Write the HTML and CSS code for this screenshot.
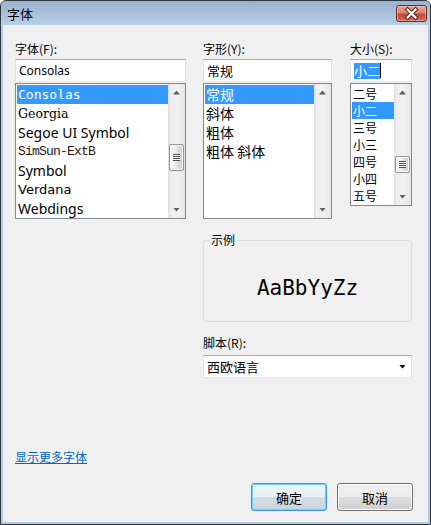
FILE: index.html
```html
<!DOCTYPE html>
<html lang="zh-CN">

<head>
  <meta charset="UTF-8">
  <title>字体</title>
  <link rel="stylesheet" href="styles.css">
</head>

<body>
  <div class="window">
    <div class="titlebar">
      <span class="titlebar__text">字体</span>
      <button class="titlebar__close" aria-label="关闭">
        <svg width="29" height="15" viewBox="0 0 29 15">
          <path d="M10.5 3.5 L18.5 11.5 M18.5 3.5 L10.5 11.5" stroke="#5b2520" stroke-width="4.2" stroke-linecap="square" fill="none" />
          <path d="M10.5 3.5 L18.5 11.5 M18.5 3.5 L10.5 11.5" stroke="#fff" stroke-width="2.2" stroke-linecap="square" fill="none" />
        </svg>
      </button>
    </div>
    <div class="frame">
      <div class="client">
        <div class="pickers">
          <div class="picker picker--font">
            <label class="field-label">字体(F):</label>
            <div class="edit">Consolas</div>
            <div class="listbox">
              <ul class="listbox__items">
                <li class="is-selected face-consolas">Consolas</li>
                <li class="face-georgia">Georgia</li>
                <li class="face-sans">Segoe UI Symbol</li>
                <li class="face-simsun">SimSun-ExtB</li>
                <li class="face-sans">Symbol</li>
                <li class="face-verdana">Verdana</li>
                <li class="face-sans">Webdings</li>
              </ul>
              <div class="scrollbar">
                <span class="scrollbar__btn scrollbar__btn--up"></span>
                <span class="scrollbar__track"><span class="scrollbar__thumb thumb-font"></span></span>
                <span class="scrollbar__btn scrollbar__btn--down"></span>
              </div>
            </div>
          </div>

          <div class="picker picker--style">
            <label class="field-label">字形(Y):</label>
            <div class="edit">常规</div>
            <div class="listbox">
              <ul class="listbox__items listbox__items--style">
                <li class="is-selected">常规</li>
                <li>斜体</li>
                <li>粗体</li>
                <li>粗体 斜体</li>
              </ul>
              <div class="scrollbar">
                <span class="scrollbar__btn scrollbar__btn--up"></span>
                <span class="scrollbar__track"></span>
                <span class="scrollbar__btn scrollbar__btn--down"></span>
              </div>
            </div>
          </div>

          <div class="picker picker--size">
            <label class="field-label">大小(S):</label>
            <div class="edit"><span class="edit__sel">小二</span><span class="edit__caret"></span></div>
            <div class="listbox listbox--short">
              <ul class="listbox__items listbox__items--size">
                <li>二号</li>
                <li class="is-selected">小二</li>
                <li>三号</li>
                <li>小三</li>
                <li>四号</li>
                <li>小四</li>
                <li>五号</li>
              </ul>
              <div class="scrollbar">
                <span class="scrollbar__btn scrollbar__btn--up"></span>
                <span class="scrollbar__track"><span class="scrollbar__thumb thumb-size"></span></span>
                <span class="scrollbar__btn scrollbar__btn--down"></span>
              </div>
            </div>
          </div>
        </div>

        <div class="extras">
          <fieldset class="sample">
            <legend>示例</legend>
            <div class="sample__text">AaBbYyZz</div>
          </fieldset>
          <label class="field-label field-label--script">脚本(R):</label>
          <div class="combo">西欧语言<span class="combo__arrow"></span></div>
        </div>

        <a class="more-link" href="#">显示更多字体</a>

        <div class="buttons">
          <button class="btn btn--default">确定</button>
          <button class="btn">取消</button>
        </div>
      </div>
    </div>
  </div>
</body>

</html>
```

FILE: styles.css
```css
* {
  box-sizing: border-box;
}

body {
  margin: 0;
  font-family: "Noto Sans CJK SC", "Noto Sans", sans-serif;
  font-size: 12px;
  color: #000;
}

.window {
  width: 431px;
  height: 525px;
  border: 1px solid #2f3740;
  border-radius: 6px 6px 0 0;
  background: #b4cbe5;
  display: flex;
  flex-direction: column;
  overflow: hidden;
}

.titlebar {
  height: 24px;
  flex: none;
  display: flex;
  justify-content: space-between;
  padding: 0 3px 0 6px;
  background: linear-gradient(#9bb2ce, #b8cfe8);
}

.titlebar__text {
  padding-top: 4px;
  line-height: 17px;
  font-size: 13px;
}

.titlebar__close {
  margin-top: 4px;
  width: 31px;
  height: 17px;
  padding: 0;
  border: 1px solid #6e2b24;
  border-radius: 3px;
  background: linear-gradient(#e6a595 0%, #d88470 45%, #c44b36 55%, #d36a4f 100%);
  box-shadow: inset 0 0 0 1px rgba(255, 220, 210, 0.45);
  display: flex;
}

.frame {
  flex: 1;
  padding: 0 2px 2px;
}

.client {
  height: 497px;
  background: #f0f0f0;
  padding: 15px 15px 11px 12px;
  display: flex;
  flex-direction: column;
}

/* three pickers */
.pickers {
  display: flex;
  align-items: flex-start;
}

.picker--font {
  width: 171px;
}

.picker--style {
  width: 129px;
  margin-left: 17px;
}

.picker--size {
  width: 62px;
  margin-left: 18px;
}

.field-label {
  display: block;
  height: 19px;
  line-height: 17px;
}

.edit {
  height: 23px;
  border: 1px solid;
  border-color: #abadb3 #dbdfe6 #e3e9ef #e2e3ea;
  background: #fff;
  padding: 0 3px;
  line-height: 21px;
  font-family: "Noto Sans", "Noto Sans CJK SC", sans-serif;
  display: flex;
  align-items: center;
}

.picker--style .edit,
.picker--size .edit {
  font-family: "Noto Sans CJK SC", sans-serif;
  font-size: 13px;
}

.edit__sel {
  background: #3399ff;
  color: #fff;
  line-height: 16px;
}

.edit__caret {
  width: 1px;
  height: 15px;
  background: #000;
}

.listbox {
  margin-top: 1px;
  height: 136px;
  border: 1px solid #828790;
  background: #fff;
  display: flex;
}

.listbox--short {
  height: 123px;
}

.listbox__items {
  flex: 1;
  min-width: 0;
  list-style: none;
  margin: 0;
  padding: 1px 0 0 1px;
  overflow: hidden;
}

.listbox__items li {
  height: 19px;
  line-height: 19px;
  padding-left: 1px;
  white-space: nowrap;
}

.listbox__items--style li {
  font-size: 14px;
}

.listbox__items--size li {
  height: 17px;
  line-height: 17px;
  font-size: 12px;
}

.listbox__items li.is-selected {
  background: #3399ff;
  color: #fff;
}

.face-consolas {
  font-family: "DejaVu Sans Mono", monospace;
  font-size: 13px;
}

.face-georgia {
  font-family: "DejaVu Serif", serif;
  font-size: 12.5px;
  font-weight: 500;
}

.face-sans {
  font-family: "Noto Sans", sans-serif;
  font-size: 14px;
}

.face-simsun {
  font-family: "Liberation Mono", monospace;
  font-size: 13px;
  letter-spacing: -0.8px;
  color: #2a1414;
}

.face-verdana {
  font-family: "DejaVu Sans", sans-serif;
  font-size: 13px;
}

/* scrollbar */
.scrollbar {
  width: 17px;
  flex: none;
  display: flex;
  flex-direction: column;
  background: linear-gradient(to right, #dadada 0, #ececec 2px, #f1f1f1 9px, #e8e8e8 16px, #e0e0e0 17px);
}

.scrollbar__btn {
  height: 17px;
  flex: none;
  display: flex;
  align-items: center;
  justify-content: center;
}

.scrollbar__btn::before {
  content: "";
  width: 7px;
  height: 4px;
  background: #5e5e5e;
}

.scrollbar__btn--up::before {
  clip-path: polygon(50% 0, 100% 100%, 0 100%);
}

.scrollbar__btn--down::before {
  clip-path: polygon(0 0, 100% 0, 50% 100%);
}

.scrollbar__track {
  flex: 1;
}

.scrollbar__thumb {
  display: flex;
  align-items: center;
  justify-content: center;
  margin: 0 1px;
  border: 1px solid #959595;
  border-radius: 2px;
  background: linear-gradient(to right, #f6f6f6, #ebebeb 50%, #dcdcdc 51%, #d2d2d2);
  box-shadow: inset 0 0 0 1px #fbfbfb;
}

.scrollbar__thumb::before {
  content: "";
  width: 7px;
  height: 7px;
  background: repeating-linear-gradient(#4f4f4f 0 1px, #f4f4f4 1px 2px);
}

.thumb-font {
  margin-top: 43px;
  height: 27px;
}

.thumb-size {
  margin-top: 55px;
  height: 17px;
}

/* sample + script */
.extras {
  width: 209px;
  margin-left: 188px;
}

.sample {
  margin: 13px 0 0;
  padding: 0;
  height: 90px;
  border: 1px solid #d5dfe5;
  border-radius: 3px;
}

.sample legend {
  margin-left: 5px;
  padding: 0 2px;
  line-height: 16px;
}

.sample__text {
  padding-top: 28px;
  text-align: center;
  font-family: "DejaVu Sans Mono", monospace;
  font-size: 21px;
  line-height: 25px;
}

.field-label--script {
  margin-top: 12px;
}

.combo {
  margin-top: 2px;
  height: 23px;
  border: 1px solid;
  border-color: #abadb3 #dbdfe6 #e3e9ef #e2e3ea;
  background: #fff;
  padding: 0 5px 0 3px;
  display: flex;
  align-items: center;
  justify-content: space-between;
  font-size: 13px;
}

.combo__arrow {
  width: 7px;
  height: 4px;
  background: #000;
  clip-path: polygon(0 0, 100% 0, 50% 100%);
}

/* bottom */
.more-link {
  align-self: flex-start;
  margin-top: 71px;
  line-height: 16px;
  color: #0066cc;
}

.buttons {
  margin-top: auto;
  display: flex;
  justify-content: flex-end;
  gap: 10px;
}

.btn {
  width: 76px;
  height: 28px;
  padding: 0;
  border: 1px solid #707070;
  border-radius: 3px;
  font: inherit;
  font-size: 13px;
  color: #000;
  background: linear-gradient(#f2f2f2 0, #ebebeb 50%, #dddddd 50%, #cfcfcf 100%);
  box-shadow: inset 0 0 0 1px #fbfbfb;
}

.btn--default {
  border-color: #3c9be0;
  background: linear-gradient(#eef5f9 0, #e6eff4 50%, #d4dfe6 50%, #c6d4dd 100%);
  box-shadow: inset 0 0 0 1px #6fd0f5, 0 0 1px #88cdf5;
}
```
